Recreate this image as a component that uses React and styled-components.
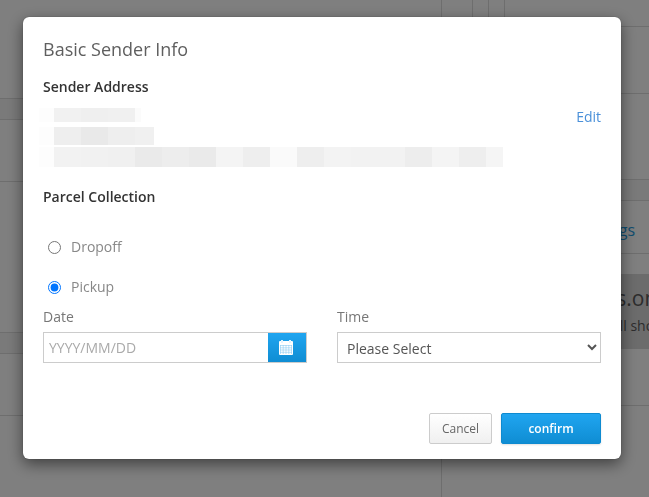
import React from "react";
import styled, { createGlobalStyle } from "styled-components";

const Global = createGlobalStyle`
  html, body { margin: 0; padding: 0; width: 649px; height: 497px; overflow: hidden; background: #fff; }
  * { box-sizing: border-box; }
  body { font-family: "Open Sans", "Liberation Sans", sans-serif; font-size: 14px; color: #333; }
`;

const Page = styled.div`
  display: flex;
  width: 649px;
  height: 497px;
  overflow: hidden;
`;
const LeftPane = styled.div`
  width: 442px;
  flex: none;
  border-right: 1px solid #ddd;
`;
const RightPane = styled.div`
  flex: 1;
  min-width: 0;
  overflow: hidden;
`;
const BgRow = styled.div`
  height: ${(p) => p.$h}px;
  border-bottom: 1px solid #ddd;
  background: ${(p) => (p.$band ? "#f5f5f5" : "#fff")};
`;
const TopCells = styled.div`
  display: flex;
  height: 27px;
  padding-left: 30px;
  border-bottom: 1px solid #ddd;
`;
const TopCell = styled.div`
  width: 16px;
  border-left: 1px solid #ddd;
  &:last-child { width: 1px; }
`;
const LinkRow = styled.div`
  height: 53px;
  border-bottom: 1px solid #ddd;
  padding: 18px 14px 0 0;
  text-align: right;
  font-size: 16px;
  line-height: 22px;
  color: #1f9ce0;
`;
const Spacer = styled.div`
  height: 20px;
`;
const Notice = styled.div`
  height: 75px;
  padding-top: 10px;
  background: #d8d8d8;
  white-space: nowrap;
  color: #5a5a5a;
`;
const NoticeTitle = styled.div`
  font-size: 21px;
  line-height: 28px;
  padding-left: 79px;
`;
const NoticeText = styled.div`
  font-size: 14px;
  line-height: 22px;
  margin-top: 3px;
  padding-left: 121px;
`;

const Overlay = styled.div`
  position: fixed;
  inset: 0;
  background: rgba(0, 0, 0, 0.5);
`;
const Modal = styled.div`
  display: flex;
  flex-direction: column;
  width: 598px;
  height: 442px;
  margin: 17px 0 0 23px;
  padding: 19px 20px 15px;
  background: #fff;
  border-radius: 6px;
  box-shadow: 0 5px 15px rgba(0, 0, 0, 0.5), 0 0 1px rgba(0, 0, 0, 0.6);
`;
const Title = styled.h4`
  margin: 0;
  font-size: 18px;
  font-weight: 400;
  line-height: 26px;
  color: #5f5f5f;
`;
const SectionLabel = styled.div`
  font-size: 14px;
  font-weight: 600;
  line-height: 20px;
  color: #333;
  margin-top: ${(p) => p.$top}px;
`;
const AddressRow = styled.div`
  display: flex;
  justify-content: space-between;
  align-items: flex-start;
  margin-top: 11px;
`;
const Mosaic = styled.div`
  display: flex;
  flex-direction: column;
  margin-left: -4px;
`;
const MosaicRow = styled.div`
  display: flex;
  height: ${(p) => p.$h}px;
  margin-bottom: ${(p) => p.$gap}px;
`;
const MosaicCell = styled.div`
  width: ${(p) => p.$w}px;
  background: ${(p) => p.$c};
`;
const EditLink = styled.a`
  font-size: 14px;
  line-height: 20px;
  margin-top: -1px;
  color: #4a90d9;
`;
const RadioGroup = styled.div`
  margin-top: 20px;
`;
const RadioRow = styled.label`
  display: flex;
  align-items: center;
  height: 40px;
  padding-left: 5px;
  color: #888;
  font-size: 14px;
`;
const Radio = styled.input`
  width: 13px;
  height: 13px;
  margin: 0 10px 0 0;
`;
const RadioText = styled.span`
  margin-bottom: 2px;
`;
const FieldRow = styled.div`
  display: grid;
  grid-template-columns: 264px 264px;
  justify-content: space-between;
`;
const Field = styled.div`
  display: flex;
  flex-direction: column;
`;
const FieldLabel = styled.label`
  font-size: 14px;
  line-height: 20px;
  color: #777;
  margin-bottom: 5px;
`;
const InputGroup = styled.div`
  display: flex;
  height: 31px;
  border: 1px solid #ccc;
`;
const DateInput = styled.input`
  flex: 1;
  min-width: 0;
  border: 0;
  outline: 0;
  padding: 0 5px;
  font: 14px "Open Sans", sans-serif;
  color: #555;
  &::placeholder { color: #aaa; opacity: 1; }
`;
const CalButton = styled.button`
  display: flex;
  align-items: center;
  justify-content: center;
  width: 38px;
  padding: 0 2px 0 0;
  border: 0;
  background: linear-gradient(#20a5f0, #0f8dd3);
`;
const TimeSelect = styled.select`
  height: 31px;
  padding: 2px 4px 0 5px;
  border: 1px solid #ccc;
  border-radius: 0;
  background: #fff;
  outline: 0;
  font: 14px "Open Sans", sans-serif;
  color: #555;
`;
const Footer = styled.div`
  display: flex;
  justify-content: flex-end;
  gap: 9px;
  margin-top: auto;
`;
const CancelButton = styled.button`
  width: 63px;
  height: 31px;
  padding: 0;
  border: 1px solid #ccc;
  border-radius: 2px;
  background: linear-gradient(#fff, #f0f0f0);
  font: 12px "Open Sans", sans-serif;
  color: #666;
`;
const ConfirmButton = styled.button`
  width: 100px;
  height: 31px;
  padding: 0;
  border: 1px solid #0e8ad0;
  border-radius: 2px;
  background: linear-gradient(#20a5f0, #0f8dd3);
  box-shadow: 0 1px 2px rgba(0, 0, 0, 0.12);
  font: 600 12px "Open Sans", sans-serif;
  color: #fff;
`;

const CalendarIcon = () => (
  <svg width="14" height="15" viewBox="0 0 14 15" aria-hidden="true">
    <rect x="0" y="1" width="14" height="14" rx="1" fill="#fff" />
    <rect x="2" y="0" width="2" height="3" fill="#e4f4fd" />
    <rect x="10" y="0" width="2" height="3" fill="#e4f4fd" />
    <g stroke="#8fcdf1" strokeWidth="0.6" fill="none">
      <path d="M1 5.5H13M1 7.8H13M1 10H13M1 12.3H13" />
      <path d="M1.5 5V14M4.2 5V14M7 5V14M9.8 5V14M12.5 5V14" />
    </g>
  </svg>
);

const rows = [
  { h: 14, gap: 5, cells: [[15, "#fdfdfd"], [27, "#f1f1f1"], [27, "#efefef"], [27, "#f0f0f0"], [6, "#fbfbfb"]] },
  { h: 18, gap: 2, cells: [[15, "#fdfdfd"], [27, "#eeeeee"], [27, "#e9e9e9"], [27, "#eeeeee"], [19, "#f0f0f0"]] },
  {
    h: 20,
    gap: 0,
    cells: [
      [15, "#fdfdfd"], [27, "#f2f2f2"], [27, "#f1f1f1"], [27, "#f0f0f0"], [27, "#eaeaea"], [27, "#ededed"],
      [27, "#eaeaea"], [27, "#f4f4f4"], [27, "#eeeeee"], [27, "#fafafa"], [27, "#eeeeee"], [27, "#f3f3f3"],
      [27, "#f2f2f2"], [27, "#f2f2f2"], [27, "#ededed"], [27, "#f4f4f4"], [27, "#eeeeee"], [17, "#f5f5f5"],
    ],
  },
];

export default function App() {
  return (
    <>
      <Global />
      <Page>
        <LeftPane>
          <BgRow $h={99} />
          <BgRow $h={21} $band />
          <BgRow $h={62} />
          <BgRow $h={151} />
          <BgRow $h={21} $band />
          <BgRow $h={62} />
        </LeftPane>
        <RightPane>
          <TopCells>
            <TopCell />
            <TopCell />
            <TopCell />
          </TopCells>
          <BgRow $h={67} />
          <BgRow $h={86} />
          <BgRow $h={21} $band />
          <LinkRow>View all listings</LinkRow>
          <Spacer />
          <Notice>
            <NoticeTitle>Your items.online</NoticeTitle>
            <NoticeText>These will show</NoticeText>
          </Notice>
          <BgRow $h={57} />
        </RightPane>
      </Page>
      <Overlay>
        <Modal>
          <Title>Basic Sender Info</Title>
          <SectionLabel $top={15}>Sender Address</SectionLabel>
          <AddressRow>
            <Mosaic>
              {rows.map((r, i) => (
                <MosaicRow key={i} $h={r.h} $gap={r.gap}>
                  {r.cells.map(([w, c], j) => (
                    <MosaicCell key={j} $w={w} $c={c} />
                  ))}
                </MosaicRow>
              ))}
            </Mosaic>
            <EditLink>Edit</EditLink>
          </AddressRow>
          <SectionLabel $top={20}>Parcel Collection</SectionLabel>
          <RadioGroup>
            <RadioRow>
              <Radio type="radio" name="collection" />
              <RadioText>Dropoff</RadioText>
            </RadioRow>
            <RadioRow>
              <Radio type="radio" name="collection" defaultChecked />
              <RadioText>Pickup</RadioText>
            </RadioRow>
          </RadioGroup>
          <FieldRow>
            <Field>
              <FieldLabel>Date</FieldLabel>
              <InputGroup>
                <DateInput placeholder="YYYY/MM/DD" />
                <CalButton>
                  <CalendarIcon />
                </CalButton>
              </InputGroup>
            </Field>
            <Field>
              <FieldLabel>Time</FieldLabel>
              <TimeSelect defaultValue="">
                <option value="">Please Select</option>
              </TimeSelect>
            </Field>
          </FieldRow>
          <Footer>
            <CancelButton>Cancel</CancelButton>
            <ConfirmButton>confirm</ConfirmButton>
          </Footer>
        </Modal>
      </Overlay>
    </>
  );
}
